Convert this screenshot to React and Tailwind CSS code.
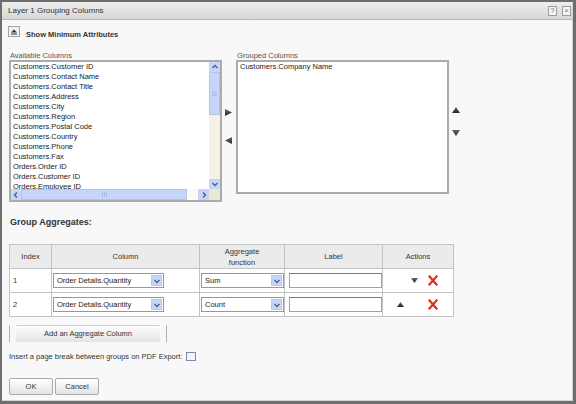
import React from 'react';

const items = [
  'Customers.Customer ID',
  'Customers.Contact Name',
  'Customers.Contact Title',
  'Customers.Address',
  'Customers.City',
  'Customers.Region',
  'Customers.Postal Code',
  'Customers.Country',
  'Customers.Phone',
  'Customers.Fax',
  'Orders.Order ID',
  'Orders.Customer ID',
  'Orders.Employee ID',
];

function Tri({ dir, w = 8, h = 7 }) {
  const pts = {
    up: `0,${h} ${w / 2},0 ${w},${h}`,
    down: `0,0 ${w},0 ${w / 2},${h}`,
    left: `${w},0 ${w},${h} 0,${h / 2}`,
    right: `0,0 ${w},${h / 2} 0,${h}`,
  }[dir];
  return (
    <svg width={w} height={h} viewBox={`0 0 ${w} ${h}`} className="block">
      <defs>
        <linearGradient id={`g-${dir}`} x1="0" y1="0" x2="0" y2="1">
          <stop offset="0" stopColor="#5b6b7b" />
          <stop offset="1" stopColor="#1f2a35" />
        </linearGradient>
      </defs>
      <polygon points={pts} fill={`url(#g-${dir})`} />
    </svg>
  );
}

function Chevron({ dir }) {
  const d = {
    up: 'M1.5 5 L4 2.5 L6.5 5',
    down: 'M1.5 3 L4 5.5 L6.5 3',
    left: 'M5 1.5 L2.5 4 L5 6.5',
    right: 'M3 1.5 L5.5 4 L3 6.5',
  }[dir];
  return (
    <svg width="8" height="8" viewBox="0 0 8 8" className="block">
      <path d={d} fill="none" stroke="#4d6185" strokeWidth="1.4" />
    </svg>
  );
}

function RedX() {
  return (
    <svg width="10" height="11" viewBox="0 0 10 11" className="block">
      <path d="M1.5 1.5 L8.5 9.5 M8.5 1.5 L1.5 9.5" stroke="#d8321f" strokeWidth="2.2" strokeLinecap="square" />
    </svg>
  );
}

function Select({ value, width }) {
  return (
    <div
      className="flex h-[15px] items-stretch border border-[#7f9db9] bg-white"
      style={{ width }}
    >
      <div className="flex flex-1 items-center pl-[3px] text-[7.5px] text-[#222]">{value}</div>
      <div className="m-[1px] flex w-[11px] items-center justify-center border border-[#b7c9f0] bg-[#c6d6fb]">
        <Chevron dir="down" />
      </div>
    </div>
  );
}

function TextInput() {
  return <div className="h-[15px] w-[93px] border border-[#a3a3a3] border-t-[#7c7c7c] bg-white" />;
}

function Btn({ children, className = '' }) {
  return (
    <button
      className={`flex h-[17px] items-center justify-center rounded-[2px] border border-[#a9a9a9] bg-gradient-to-b from-white to-[#e3e3e3] text-[7.5px] text-[#333] ${className}`}
    >
      {children}
    </button>
  );
}

export default function App() {
  return (
    <div className="h-[404px] w-[576px] border-l-2 border-t-2 border-r-[3px] border-b-[3px] border-[#6e6e6e] font-['Liberation_Sans',Arial,sans-serif]">
      <div className="flex h-full flex-col border-r border-b border-[#d4d4d4] bg-[#f8f8f8]">
        {/* title bar */}
        <div className="flex h-[18px] shrink-0 items-center justify-between border-b border-[#b9b9b9] bg-gradient-to-b from-[#ededed] to-[#d8d8d8] pl-[6px] pr-[1px]">
          <span className="text-[8px] text-[#333]">Layer 1 Grouping Columns</span>
          <div className="flex gap-[5px]">
            <div className="flex h-[10px] w-[9px] items-center justify-center border border-[#9c9c9c] bg-[#f3f3f3] text-[7px] leading-none text-[#666]">?</div>
            <div className="flex h-[10px] w-[9px] items-center justify-center border border-[#9c9c9c] bg-[#f3f3f3] text-[7px] leading-none text-[#777]">×</div>
          </div>
        </div>

        <div className="flex flex-col pl-[7px]">
          {/* show minimum attributes */}
          <div className="mt-[6px] flex items-start">
            <div className="-ml-px flex h-[11px] w-[12px] items-center justify-center border border-[#a3a3a3] bg-[#f1f1f1]">
              <svg width="6" height="6" viewBox="0 0 6 6" className="block">
                <polygon points="0,3.5 3,0.5 6,3.5" fill="#333" />
                <rect x="0" y="4.5" width="6" height="1" fill="#333" />
              </svg>
            </div>
            <span className="ml-[6px] mt-[4px] text-[7.5px] font-bold leading-[9px] text-[#333]">Show Minimum Attributes</span>
          </div>

          {/* labels */}
          <div className="mt-[12px] flex text-[7.5px] leading-[9px] text-[#555]">
            <span className="ml-px w-[227px]">Available Columns</span>
            <span>Grouped Columns</span>
          </div>

          {/* list boxes */}
          <div className="flex items-start">
            <div className="flex h-[142px] w-[213px] flex-col border-2 border-[#ababab] bg-white">
              <div className="flex min-h-0 flex-1">
                <div className="flex-1 overflow-hidden pl-[2px] text-[7.5px] leading-[10px] text-[#222]">
                  {items.map((it) => (
                    <div key={it} className="whitespace-nowrap">{it}</div>
                  ))}
                </div>
                <div className="flex w-[11px] flex-col bg-[#f4f2e7]">
                  <div className="flex h-[10px] items-center justify-center bg-[#c6d6fb]">
                    <Chevron dir="up" />
                  </div>
                  <div className="flex h-[43px] flex-col items-center justify-center gap-px border border-[#b0c4ee] bg-[#c6d6fb]">
                    <div className="h-px w-[5px] bg-[#a9bdea]" />
                    <div className="h-px w-[5px] bg-[#a9bdea]" />
                    <div className="h-px w-[5px] bg-[#a9bdea]" />
                  </div>
                  <div className="flex-1" />
                  <div className="flex h-[10px] items-center justify-center bg-[#c6d6fb]">
                    <Chevron dir="down" />
                  </div>
                </div>
              </div>
              <div className="flex h-[11px] shrink-0">
                <div className="flex w-[10px] items-center justify-center bg-[#c6d6fb]">
                  <Chevron dir="left" />
                </div>
                <div className="flex w-[166px] items-center justify-center gap-px border border-[#b0c4ee] bg-[#c6d6fb]">
                  <div className="h-[5px] w-px bg-[#a9bdea]" />
                  <div className="h-[5px] w-px bg-[#a9bdea]" />
                  <div className="h-[5px] w-px bg-[#a9bdea]" />
                </div>
                <div className="flex-1 bg-[#fbfaf4]" />
                <div className="flex w-[11px] items-center justify-center bg-[#c6d6fb]">
                  <Chevron dir="right" />
                </div>
                <div className="w-[11px] bg-[#ece8d8]" />
              </div>
            </div>

            <div className="flex w-[14px] flex-col pl-[3px] pt-[49px]">
              <Tri dir="right" w={7} h={7} />
              <div className="mt-[21px]">
                <Tri dir="left" w={7} h={7} />
              </div>
            </div>

            <div className="h-[134px] w-[213px] border-2 border-[#ababab] bg-white pl-[2px] text-[7.5px] leading-[10px] text-[#222]">
              Customers.Company Name
            </div>

            <div className="flex flex-col pl-[3px] pt-[47px]">
              <Tri dir="up" w={8} h={6} />
              <div className="mt-[17px]">
                <Tri dir="down" w={8} h={6} />
              </div>
            </div>
          </div>

          {/* group aggregates */}
          <div className="ml-px mt-[14px] text-[9px] font-bold leading-[12px] text-[#333]">Group Aggregates:</div>

          <table className="mt-[16px] w-[444px] table-fixed border-collapse border border-[#a8a8a8] text-[7.5px] text-[#333]">
            <colgroup>
              <col className="w-[42px]" />
              <col className="w-[148px]" />
              <col className="w-[85px]" />
              <col className="w-[98px]" />
              <col className="w-[71px]" />
            </colgroup>
            <thead>
              <tr className="h-[24px] bg-[#ebebeb]">
                <th className="border border-[#c4c4c4] font-normal">Index</th>
                <th className="border border-[#c4c4c4] font-normal">Column</th>
                <th className="border border-[#c4c4c4] font-normal leading-[11px]">Aggregate<br />function</th>
                <th className="border border-[#c4c4c4] font-normal">Label</th>
                <th className="border border-[#c4c4c4] font-normal">Actions</th>
              </tr>
            </thead>
            <tbody>
              {[
                { i: 1, fn: 'Sum', up: false, down: true },
                { i: 2, fn: 'Count', up: true, down: false },
              ].map((r) => (
                <tr key={r.i} className="h-[24px] bg-white">
                  <td className="border border-[#c4c4c4] pl-[3px]">{r.i}</td>
                  <td className="border border-[#c4c4c4] pl-px">
                    <Select value="Order Details.Quantity" width={111} />
                  </td>
                  <td className="border border-[#c4c4c4] pl-px">
                    <Select value={r.fn} width={83} />
                  </td>
                  <td className="border border-[#c4c4c4] pl-[4px]">
                    <TextInput />
                  </td>
                  <td className="border border-[#c4c4c4]">
                    <div className="flex items-center">
                      <div className="ml-[14px] w-[7px]">{r.up && <Tri dir="up" w={7} h={5} />}</div>
                      <div className="ml-[7px] w-[7px]">{r.down && <Tri dir="down" w={7} h={5} />}</div>
                      <div className="ml-[10px]">
                        <RedX />
                      </div>
                    </div>
                  </td>
                </tr>
              ))}
            </tbody>
          </table>

          {/* add aggregate */}
          <div className="mt-[8px] flex h-[17px] items-stretch">
            <div className="w-px bg-[#b3b3b3]" />
            <button className="ml-[6px] flex w-[144px] items-center justify-center rounded-[2px] border-t border-[#d0d0d0] bg-gradient-to-b from-[#fdfdfd] to-[#e4e4e4] text-[7.5px] text-[#333]">
              Add an Aggregate Column
            </button>
            <div className="ml-[6px] w-px bg-[#b3b3b3]" />
          </div>

          <div className="mt-[9px] flex items-center text-[7.5px] leading-[11px] text-[#333]">
            <span>Insert a page break between groups on PDF Export:</span>
            <div className="ml-[4px] h-[9px] w-[10px] border border-[#7b8aa6] bg-[#f1f4f9]" />
          </div>

          <div className="mt-[16px] flex gap-[2px]">
            <Btn className="w-[44px]">OK</Btn>
            <Btn className="w-[44px]">Cancel</Btn>
          </div>
        </div>
      </div>
    </div>
  );
}
